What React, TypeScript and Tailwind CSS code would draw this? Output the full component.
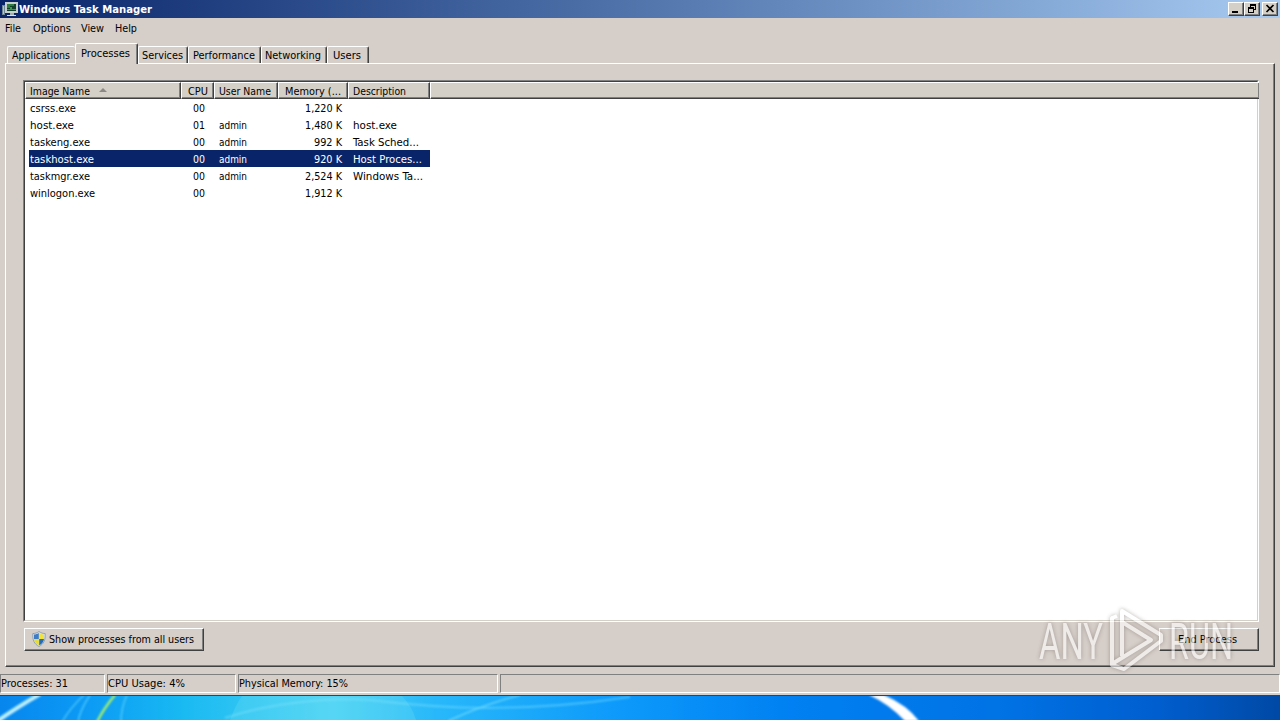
import clsx from "clsx";
import type { ReactNode } from "react";

const MENU = [
  { label: "File", width: 16, gap: "mr-3" },
  { label: "Options", width: 38, gap: "mr-[10px]" },
  { label: "View", width: 23, gap: "mr-[11px]" },
  { label: "Help", width: 22, gap: "" },
];

const TABS = [
  { label: "Applications", width: "w-[68px]", text: 58 },
  { label: "Processes", width: "w-[63px]", text: 49 },
  { label: "Services", width: "w-[50px]", text: 41 },
  { label: "Performance", width: "w-[73px]", text: 62 },
  { label: "Networking", width: "w-[66px]", text: 56 },
  { label: "Users", width: "w-[42px]", text: 28 },
];

type Cell = [text: string, width: number];

interface Process {
  name: Cell;
  cpu: string;
  user?: string;
  memory: Cell;
  description?: Cell;
}

const PROCESSES: Process[] = [
  { name: ["csrss.exe", 46], cpu: "00", memory: ["1,220 K", 37] },
  { name: ["host.exe", 44], cpu: "01", user: "admin", memory: ["1,480 K", 37], description: ["host.exe", 44] },
  { name: ["taskeng.exe", 60], cpu: "00", user: "admin", memory: ["992 K", 28], description: ["Task Sched...", 66] },
  { name: ["taskhost.exe", 64], cpu: "00", user: "admin", memory: ["920 K", 28], description: ["Host Proces...", 69] },
  { name: ["taskmgr.exe", 60], cpu: "00", user: "admin", memory: ["2,524 K", 37], description: ["Windows Ta...", 70] },
  { name: ["winlogon.exe", 65], cpu: "00", memory: ["1,912 K", 37] },
];

const SELECTED = "taskhost.exe";

const COLUMNS = "grid grid-cols-[156px_33px_64px_70px_82px_1fr]";

// A label fitted to the width the classic bitmap UI font would take.
function Label({ children, width, bold }: { children: string; width: number; bold?: boolean }) {
  return (
    <svg width={width} height={14} className="block shrink-0 overflow-visible" fill="currentColor">
      <text
        x={0}
        y={11}
        textLength={width}
        lengthAdjust="spacingAndGlyphs"
        className={clsx(
          "font-['DejaVu_Sans_Condensed','DejaVu_Sans',sans-serif] text-[11px]",
          bold && "font-bold",
        )}
      >
        {children}
      </text>
    </svg>
  );
}

function MonitorIcon() {
  return (
    <svg width="17" height="16" viewBox="0 0 17 16" shapeRendering="crispEdges">
      <path d="M0 4h3v10H0z" fill="#6f8795" />
      <path d="M1 5h1v8H1z" fill="#b5c5ca" />
      <path d="M3 1h13v11H3z" fill="#c5d0cc" />
      <path d="M5 3h9v7H5z" fill="#123f2a" />
      <path d="M5 3h7v2H8v2H5z" fill="#2f7d40" />
      <path d="M5 8h3V6h2v2h4v1H5z" fill="#3a9a4a" />
      <path d="M8 12h4v2H8z" fill="#a3afad" />
      <path d="M5 14h9v1H5z" fill="#dde2df" />
    </svg>
  );
}

function ShieldIcon() {
  return (
    <svg width="14" height="16" viewBox="0 0 14 16">
      <path d="M7 .5C5 2 3 2.5.8 2.6.4 9 2.2 13 7 15.5 11.8 13 13.6 9 13.2 2.6 11 2.5 9 2 7 .5z" fill="#d8e2e8" stroke="#8296a4" strokeWidth=".8" />
      <path d="M6.8 2C5.3 3 3.8 3.4 2 3.6V8h4.8z" fill="#3e7dc5" />
      <path d="M7.2 2C8.7 3 10.2 3.4 12 3.6V8H7.2z" fill="#f3e237" />
      <path d="M2 8c.4 3 2 5 4.8 6.3V8z" fill="#eadb35" />
      <path d="M12 8c-.4 3-2 5-4.8 6.3V8z" fill="#276bb6" />
    </svg>
  );
}

function CaptionButton({ children }: { children: ReactNode }) {
  return (
    <div className="h-[14px] w-4 border border-t-white border-r-[#404040] border-b-[#404040] border-l-white bg-[#d4d0c8] shadow-[inset_-1px_-1px_#808080]">
      <svg width="14" height="12" viewBox="0 0 14 12" fill="none" stroke="black" shapeRendering="crispEdges">
        {children}
      </svg>
    </div>
  );
}

function TitleBar() {
  return (
    <header className="flex h-[18px] items-center bg-linear-to-r from-[#0a246a] to-[#a6caf0] pr-[2px] pl-[2px] text-white">
      <MonitorIcon />
      <div className="flex-1">
        <Label width={133} bold>Windows Task Manager</Label>
      </div>
      <div className="flex">
        <CaptionButton>
          <path d="M3 9h6" strokeWidth="2" />
        </CaptionButton>
        <CaptionButton>
          <path d="M5 1h6v2H5z" fill="black" stroke="none" />
          <path d="M5.500 2v2M10.500 2v4.500H9" />
          <path d="M3 4h6v2H3z" fill="black" stroke="none" />
          <path d="M3.500 5v4.500h5V5" />
        </CaptionButton>
        <div className="w-[2px]" />
        <CaptionButton>
          <path d="M3.500 2l7 7M10.500 2l-7 7" strokeWidth="1.700" shapeRendering="auto" />
        </CaptionButton>
      </div>
    </header>
  );
}

function Tabs() {
  return (
    <nav className="flex h-5 items-end pl-[7px]">
      {TABS.map((tab, i) => {
        const active = tab.label === "Processes";
        return (
          <div
            key={tab.label}
            className={clsx(
              "flex justify-center rounded-t-[2px] border-t border-l border-white",
              tab.width,
              i === 0 ? "pr-px" : "border-r border-r-[#404040] pr-[2px] shadow-[inset_-1px_0_#808080]",
              active ? "relative z-10 -mb-px h-[21px] bg-[#d6cec8] pt-[2px]" : "h-[17px] pt-px",
            )}
          >
            <Label width={tab.text}>{tab.label}</Label>
          </div>
        );
      })}
    </nav>
  );
}

function HeaderCell({ children, className }: { children?: ReactNode; className?: string }) {
  return (
    <div
      className={clsx(
        "flex h-[17px] items-center border border-t-white border-r-[#404040] border-b-[#404040] border-l-white bg-[#d4d0c8] shadow-[inset_-1px_-1px_#808080]",
        className,
      )}
    >
      {children}
    </div>
  );
}

function ProcessList() {
  return (
    <div className="h-[542px] border border-t-[#808080] border-r-white border-b-white border-l-[#808080]">
      <div className="h-full border border-t-[#404040] border-r-[#d4d0c8] border-b-[#d4d0c8] border-l-[#404040] bg-white">
        <div className={COLUMNS}>
          <HeaderCell className="gap-[9px] pl-1">
            <Label width={60}>Image Name</Label>
            <svg width="8" height="4" className="-mt-0.5">
              <path d="M4 0l4 4H0z" fill="#8c8984" />
            </svg>
          </HeaderCell>
          <HeaderCell className="justify-end pr-[5px]"><Label width={20}>CPU</Label></HeaderCell>
          <HeaderCell className="pl-[4px]"><Label width={52}>User Name</Label></HeaderCell>
          <HeaderCell className="justify-end pr-[6px]"><Label width={56}>Memory (...</Label></HeaderCell>
          <HeaderCell className="pl-[4px]"><Label width={53}>Description</Label></HeaderCell>
          <HeaderCell className="mr-[-2px] border-r-0" />
        </div>
        {PROCESSES.map((p) => (
          <div
            key={p.name[0]}
            className={clsx(
              COLUMNS,
              "h-[17px] items-center pt-px",
              p.name[0] === SELECTED &&
                "bg-linear-to-r from-transparent from-[4px] via-[#0a246a] via-[4px] to-[#0a246a] to-[405px] bg-[length:405px_17px] bg-no-repeat text-white",
            )}
          >
            <div className="pl-[5px]"><Label width={p.name[1]}>{p.name[0]}</Label></div>
            <div className="flex justify-end pr-[9px]"><Label width={12}>{p.cpu}</Label></div>
            <div className="pl-[5px]">{p.user && <Label width={28}>{p.user}</Label>}</div>
            <div className="flex justify-end pr-[6px]"><Label width={p.memory[1]}>{p.memory[0]}</Label></div>
            <div className="pl-[5px]">
              {p.description && <Label width={p.description[1]}>{p.description[0]}</Label>}
            </div>
          </div>
        ))}
      </div>
    </div>
  );
}

function Button({ children, className }: { children: ReactNode; className?: string }) {
  return (
    <button
      className={clsx(
        "flex h-[23px] items-center border border-t-white border-r-[#404040] border-b-[#404040] border-l-white pb-px shadow-[inset_-1px_-1px_#808080]",
        className,
      )}
    >
      {children}
    </button>
  );
}

function StatusPanel({ label, width, className }: { label?: string; width?: number; className?: string }) {
  return (
    <div
      className={clsx(
        "flex h-[19px] items-center border border-t-[#808080] border-r-white border-b-white border-l-[#808080] pb-[2px]",
        className,
      )}
    >
      {label && <Label width={width ?? 0}>{label}</Label>}
    </div>
  );
}

function Wallpaper() {
  return (
    <svg className="block h-6 w-full" viewBox="0 0 1280 24" preserveAspectRatio="none">
      <defs>
        <linearGradient id="sky">
          <stop offset="0" stopColor="#0786ee" />
          <stop offset=".07" stopColor="#0c9bf5" />
          <stop offset=".14" stopColor="#18b9f2" />
          <stop offset=".26" stopColor="#4dd2f4" />
          <stop offset=".34" stopColor="#28b8fa" />
          <stop offset=".48" stopColor="#0d9afb" />
          <stop offset=".62" stopColor="#0080f2" />
          <stop offset=".78" stopColor="#0073e5" />
          <stop offset=".9" stopColor="#005fd0" />
          <stop offset="1" stopColor="#0049a5" />
        </linearGradient>
        <filter id="soft" x="-20%" y="-20%" width="140%" height="140%">
          <feGaussianBlur stdDeviation=".8" />
        </filter>
      </defs>
      <path d="M0 0h1280v24H0z" fill="url(#sky)" />
      <path d="M230 24Q236 8 242 0H402Q412 10 416 24z" fill="#73e2f5" opacity=".25" />
      <g fill="none" filter="url(#soft)">
        <path d="M-4 26Q16 12 40-2" stroke="#bdf0ff" strokeWidth="4" />
        <path d="M62 26Q70 12 84-1M78 26Q80 14 90-1M121 26Q121 12 127-1" stroke="#62d9ff" strokeWidth="1.500" opacity=".7" />
        <path d="M97 26Q104 12 115-1" stroke="#a6f06a" strokeWidth="2.500" />
        <path d="M225 22C270 7 330 1 370 4C450 14 530 16 630 1" stroke="#86e7ff" strokeWidth="2" opacity=".45" />
        <path d="M448 25Q485 8 520-1" stroke="#7ee2ff" strokeWidth="1.500" opacity=".7" />
      </g>
      <path d="M800-1H815Q838 9 850 25H836Q820 8 800-1z" transform="translate(69)" fill="white" filter="url(#soft)" />
    </svg>
  );
}

function Watermark() {
  return (
    <svg
      className="pointer-events-none absolute top-[600px] left-[1030px]"
      width="210"
      height="80"
      viewBox="1030 600 210 80"
    >
      <g className="opacity-60 drop-shadow-[0_0_2px_rgba(90,80,75,0.7)]">
        <g fill="white" className="font-[Roboto,sans-serif] text-[50px] font-normal">
          <text x="1039" y="659" textLength="64" lengthAdjust="spacingAndGlyphs">ANY</text>
          <text x="1169" y="659" textLength="64" lengthAdjust="spacingAndGlyphs">RUN</text>
        </g>
        <g fill="none" stroke="white" strokeWidth="4" strokeLinejoin="round">
          <path d="M1122 656V611L1161 635V641L1124 669L1112 665V618L1117 616" />
          <path d="M1122 622L1151 640L1112 664" />
        </g>
      </g>
    </svg>
  );
}

export default function App() {
  return (
    <main className="relative h-[720px] w-[1280px] overflow-hidden bg-[#d6cec8] text-black">
      <TitleBar />
      <nav className="flex h-[25px] pt-[3px] pl-[5px]">
        {MENU.map((item) => (
          <div key={item.label} className={item.gap}>
            <Label width={item.width}>{item.label}</Label>
          </div>
        ))}
      </nav>
      <Tabs />
      <section className="mx-[5px] h-[604px] border border-t-white border-r-[#404040] border-b-[#404040] border-l-white px-[17px] pt-4 shadow-[inset_-1px_-1px_#808080]">
        <div className="mr-[-2px]">
          <ProcessList />
          <div className="mt-[6px] flex justify-between pl-px">
            <Button className="w-[180px] gap-[3px] pl-[7px]">
              <ShieldIcon />
              <Label width={145}>Show processes from all users</Label>
            </Button>
            <Button className="w-[100px] justify-center pr-[3px]">
              <Label width={59}>End Process</Label>
            </Button>
          </div>
        </div>
      </section>
      <footer className="flex h-[29px] gap-[2px] border-b border-[#404040] pt-[7px]">
        <StatusPanel className="w-[105px]" label="Processes: 31" width={67} />
        <StatusPanel className="w-[129px]" label="CPU Usage: 4%" width={77} />
        <StatusPanel className="w-[260px]" label="Physical Memory: 15%" width={109} />
        <StatusPanel className="flex-1" />
      </footer>
      <Wallpaper />
      <Watermark />
    </main>
  );
}
